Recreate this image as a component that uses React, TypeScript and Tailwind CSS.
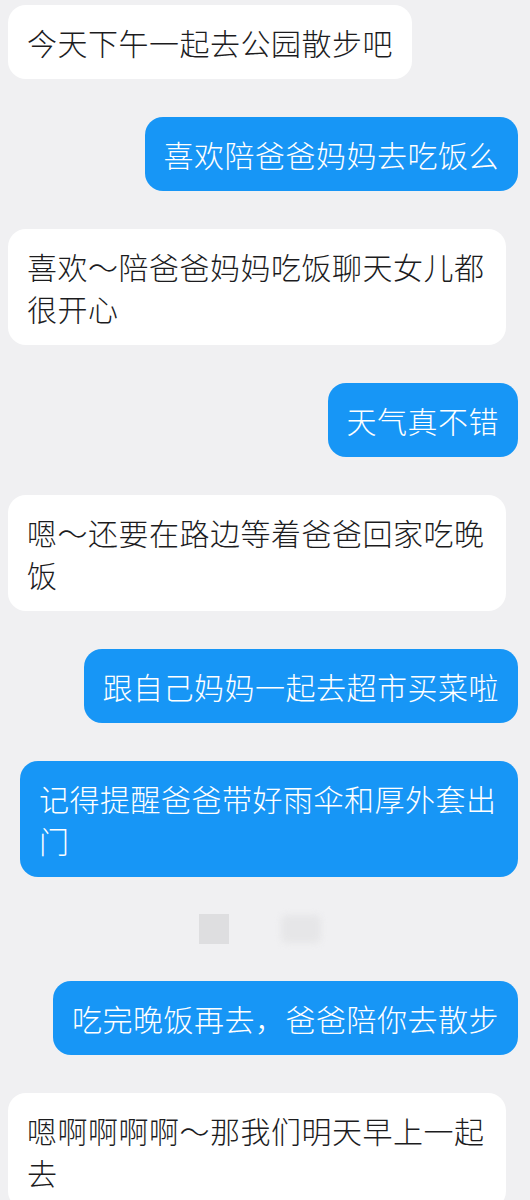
import React from "react";

type Msg = { side: "left" | "right"; text: string } | { side: "time" };

const msgs: Msg[] = [
  { side: "left", text: "今天下午一起去公园散步吧" },
  { side: "right", text: "喜欢陪爸爸妈妈去吃饭么" },
  { side: "left", text: "喜欢～陪爸爸妈妈吃饭聊天女儿都很开心" },
  { side: "right", text: "天气真不错" },
  { side: "left", text: "嗯～还要在路边等着爸爸回家吃晚饭" },
  { side: "right", text: "跟自己妈妈一起去超市买菜啦" },
  { side: "right", text: "记得提醒爸爸带好雨伞和厚外套出门" },
  { side: "time" },
  { side: "right", text: "吃完晚饭再去，爸爸陪你去散步" },
  { side: "left", text: "嗯啊啊啊啊～那我们明天早上一起去" },
];

export default function App() {
  return (
    <div
      className="w-[530px] h-[1200px] overflow-hidden bg-[#f0f0f2] flex flex-col gap-[38px] pt-[5px]"
      style={{ fontFamily: '"Noto Sans CJK SC", "Noto Sans", sans-serif' }}
    >
      {msgs.map((m, i) => {
        if (m.side === "time") {
          return (
            <div key={i} className="h-[28px] flex items-center justify-center gap-[52px] pr-[10px] shrink-0">
              <div className="w-[30px] h-[30px] bg-[#dedee0]" />
              <div className="w-[40px] h-[28px] rounded-md bg-[#e6e6e8] blur-[3px]" />
            </div>
          );
        }
        const left = m.side === "left";
        return (
          <div
            key={i}
            className={`flex shrink-0 ${left ? "justify-start pl-[8px]" : "justify-end pr-[12px]"}`}
          >
            <div
              className={`max-w-[498px] rounded-[18px] px-[19px] py-[16px] text-[30px] leading-[42px] tracking-[0.5px] font-light break-all ${
                left ? "bg-white text-[#1c1c1e]" : "bg-[#1796f6] text-white"
              }`}
            >
              {m.text}
            </div>
          </div>
        );
      })}
    </div>
  );
}
